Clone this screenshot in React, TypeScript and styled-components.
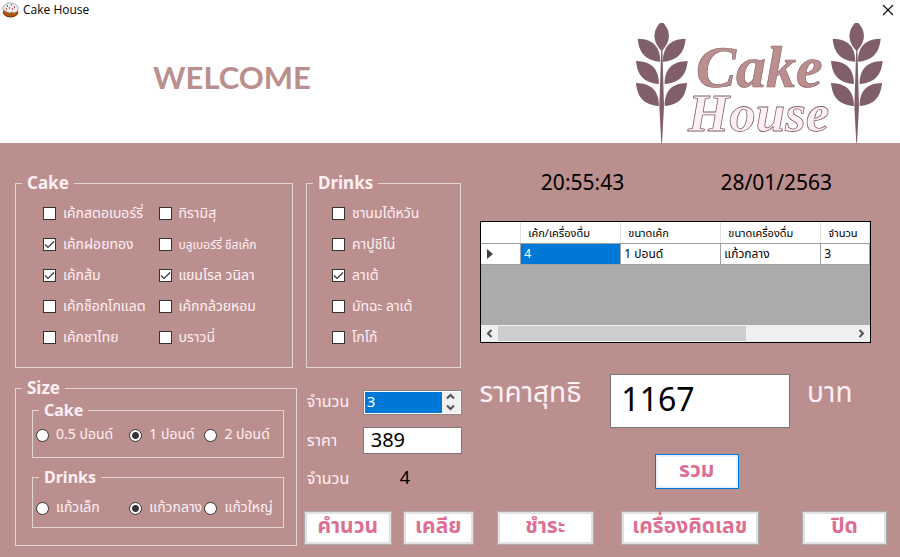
import React from "react";
import styled, { createGlobalStyle, css } from "styled-components";

const rose = "#bc8f8f";
const blush = "#fff0f5";
const pink = "#db7093";
const blue = "#0078d7";
const thai = `"Noto Sans Thai", "Noto Sans", "Open Sans", sans-serif`;

const GlobalStyle = createGlobalStyle`
  * { box-sizing: border-box; }
  body { margin: 0; background: ${rose}; font-family: ${thai}; }
  button, input, select { font-family: inherit; margin: 0; }
`;

const Window = styled.div`
  display: flex;
  flex-direction: column;
  min-height: 100vh;
  background: ${rose};
  border-bottom: 1px solid #26404a;
`;

const TitleBar = styled.header`
  display: flex;
  align-items: center;
  gap: 4px;
  height: 20px;
  padding: 0 6px 0 2px;
  background: #fff;
  font: 12px/16px "Open Sans", sans-serif;
  color: #000;
`;

const CloseButton = styled.button`
  display: flex;
  margin-left: auto;
  padding: 0;
  border: 0;
  background: none;
`;

const Banner = styled.div`
  display: flex;
  justify-content: space-between;
  height: 123px;
  padding: 3px 17px 0 153px;
  background: #fff;
`;

const Welcome = styled.h1`
  margin: 32px 0 0;
  font: bold 31px/44px Lato, "Liberation Sans", sans-serif;
  color: ${rose};
`;

const Content = styled.main`
  flex: 1;
  display: flex;
  flex-direction: column;
  gap: 6px;
  padding: 30px 13px 11px 15px;
`;

const Section = styled.div`
  display: flex;
`;

const Group = styled.fieldset<{ $grow: string; $after?: string; $top?: string }>`
  flex: ${(p) => p.$grow};
  min-width: 0;
  margin: ${(p) => p.$top ?? "0"} ${(p) => p.$after ?? "0"} 0 0;
  padding: 0;
  border: 1px solid #e3d5d3;
`;

const Legend = styled.legend<{ $small?: boolean }>`
  margin-left: 6px;
  padding: 0 5px;
  font: bold ${(p) => (p.$small ? "16px" : "17px")} / 20px "Noto Sans", sans-serif;
  color: ${blush};
`;

const Choices = styled.div<{ $columns: string; $indent: string }>`
  display: grid;
  grid-template-columns: ${(p) => p.$columns};
  grid-auto-rows: 31px;
  padding: 5px 0 14px ${(p) => p.$indent};
`;

const Choice = styled.label<{ $small?: boolean }>`
  display: flex;
  align-items: center;
  gap: 7px;
  min-width: 0;
  font-size: ${(p) => (p.$small ? "12px" : "14px")};
  line-height: 20px;
  white-space: nowrap;
  color: ${blush};
`;

const Tick = styled.input.attrs({ type: "checkbox" })`
  appearance: none;
  flex: none;
  width: 13px;
  height: 13px;
  border: 1px solid #333;
  background: #fff;
  &:checked {
    background: #fff
      url("data:image/svg+xml,%3Csvg xmlns='http://www.w3.org/2000/svg' viewBox='0 0 11 11'%3E%3Cpath d='M1 5.5l3 3 6-6' fill='none' stroke='%23333' stroke-width='1.2'/%3E%3C/svg%3E");
  }
`;

const Radio = styled.input.attrs({ type: "radio" })`
  appearance: none;
  flex: none;
  width: 13px;
  height: 13px;
  border: 1px solid #333;
  border-radius: 50%;
  background: #fff;
  &:checked {
    background: radial-gradient(circle, #333 0 3px, #fff 4px);
  }
`;

const SizeBody = styled.div`
  display: flex;
  flex-direction: column;
  gap: 9px;
  padding: 2px 12px 17px 16px;
`;

const RadioRow = styled.div<{ $pad: string }>`
  display: grid;
  grid-template-columns: 93fr 75fr 78fr;
  padding: ${(p) => p.$pad};
`;

const OrderPanel = styled.div`
  flex: 394;
  min-width: 0;
  margin-right: 16px;
`;

const Clock = styled.div`
  display: grid;
  grid-template-columns: 180fr 151fr;
  height: 48px;
  padding-left: 61px;
  font: 21px/18px "Noto Sans", sans-serif;
  color: #000;
`;

const GridBox = styled.div`
  display: flex;
  flex-direction: column;
  height: 122px;
  border: 1px solid #000;
  background: #ababab;
  overflow: hidden;
`;

const Grid = styled.table`
  width: 100%;
  table-layout: fixed;
  border-collapse: collapse;
  background: #fff;
  font-size: 11px;
  line-height: 16px;
  color: #000;
`;

const GridColumn = styled.col<{ $width?: string }>`
  width: ${(p) => p.$width ?? "auto"};
`;

const cell = css`
  height: 21px;
  border-right: 1px solid #a0a0a0;
  border-bottom: 1px solid #a0a0a0;
  text-align: left;
  font-weight: normal;
  white-space: nowrap;
  overflow: hidden;
`;

const HeadCell = styled.th`
  ${cell}
  padding: 3px 0 0 7px;
  border-right-color: #e0e0e0;
`;

const Cell = styled.td<{ $selected?: boolean }>`
  ${cell}
  padding: 0 0 0 3px;
  background: ${(p) => (p.$selected ? blue : "#fff")};
  color: ${(p) => (p.$selected ? "#fff" : "#000")};
  font-size: 12px;
`;

const Marker = styled.td`
  ${cell}
  padding: 0 0 0 6px;
  svg { display: block; }
`;

const ScrollBar = styled.div`
  display: flex;
  align-items: center;
  height: 17px;
  margin-top: auto;
  background: #f0f0f0;
`;

const ScrollArrow = styled.button`
  display: flex;
  justify-content: center;
  width: 17px;
  padding: 0;
  border: 0;
  background: none;
`;

const ScrollTrack = styled.div`
  flex: 1;
  height: 15px;
`;

const ScrollThumb = styled.div`
  width: 70%;
  height: 100%;
  background: #cdcdcd;
`;

const Checkout = styled.div`
  flex: 586;
  display: flex;
  flex-direction: column;
  justify-content: space-between;
  min-width: 0;
`;

const CheckoutTop = styled.div`
  display: flex;
`;

const Fields = styled.div`
  flex: 155;
  display: grid;
  grid-template-columns: 56px minmax(0, 1fr);
  grid-template-rows: 26px 27px 26px;
  row-gap: 12px;
  align-content: start;
  align-items: center;
  min-width: 0;
  padding: 15px 18px 0 3px;
`;

const FieldLabel = styled.label`
  font-size: 16px;
  line-height: 24px;
  white-space: nowrap;
  color: ${blush};
`;

const Spinner = styled.div`
  display: flex;
  height: 25px;
  border: 1px solid #8a8583;
  background: #fff;
  padding: 1px;
`;

const SpinnerInput = styled.input`
  flex: 1;
  min-width: 0;
  padding: 0 2px;
  border: 0;
  background: ${blue};
  color: #fff;
  font-size: 15px;
`;

const SpinnerButtons = styled.div`
  display: flex;
  flex-direction: column;
  width: 18px;
  background: #f0f0f0;
`;

const SpinnerButton = styled.button`
  flex: 1;
  display: flex;
  align-items: center;
  justify-content: center;
  padding: 0;
  border: 0;
  background: none;
`;

const ValueInput = styled.input<{ $large?: boolean }>`
  width: 100%;
  min-width: 0;
  height: ${(p) => (p.$large ? "54px" : "27px")};
  padding: ${(p) => (p.$large ? "0 10px" : "0 7px")};
  border: 1px solid #7a7a7a;
  background: #fff;
  color: #000;
  font-size: ${(p) => (p.$large ? "32px" : "20px")};
  line-height: 1;
`;

const Count = styled.output`
  padding-left: 37px;
  font-size: 18px;
  line-height: 24px;
  color: #000;
`;

const Totals = styled.div`
  flex: 408;
  display: flex;
  flex-direction: column;
  gap: 26px;
  min-width: 0;
`;

const TotalRow = styled.div`
  display: grid;
  grid-template-columns: minmax(0, 131fr) minmax(0, 180fr) minmax(0, 97fr);
  align-items: start;
`;

const TotalLabel = styled.label<{ $indent?: string }>`
  padding: 0 0 0 ${(p) => p.$indent ?? "0"};
  font-size: 28px;
  line-height: 40px;
  white-space: nowrap;
  color: ${blush};
`;

const ActionButton = styled.button<{ $width: string; $after?: string; $focused?: boolean }>`
  flex: none;
  width: ${(p) => p.$width};
  height: ${(p) => (p.$focused ? "35px" : "34px")};
  margin-right: ${(p) => p.$after ?? "0"};
  padding: 0 0 2px;
  border: 1px solid ${(p) => (p.$focused ? blue : "#adadad")};
  box-shadow: inset 0 0 0 2px ${(p) => (p.$focused ? "#e5f1fb" : "#e1e1e1")};
  background: #fff;
  color: ${pink};
  font-size: 21px;
  font-weight: bold;
  line-height: 28px;
  white-space: nowrap;
`;

const SumRow = styled.div`
  display: flex;
  padding-left: 43%;
`;

const ActionRow = styled.div`
  display: flex;
  width: 100%;
  padding-bottom: 1px;
`;

function CakeIcon() {
  return (
    <svg width="17" height="16" viewBox="0 0 17 16" aria-hidden="true">
      <path d="M1 6v5c1 3 4 4 7.500 4s7-1 7.500-4V6z" fill="#b5560f" />
      <path d="M1 10c1 3 4 5 7.500 5s7-2 7.500-5" fill="none" stroke="#6d3208" />
      <path d="M1 5c1-2 4-4 7.500-4S16 3 16 6v3l-2 1-2 1-2-1-2 1-3-1-2-1-2-1z" fill="#f3eeee" stroke="#888" strokeWidth=".7" />
      <path d="M5 4h1M9 3h1M12 5h1M7 6h1M4 7h1M10 7h1" stroke="#c02035" strokeWidth="1.300" />
    </svg>
  );
}

function Sprig({ x }: { x: number }) {
  return (
    <g transform={`translate(${x} 0) scale(.3333)`} fill="#805f6b">
      <path d="M72 0h10c19 20 27 52-5 84C45 52 53 20 72 0z" />
      <path d="M149 47c-50 1-68 28-68 69 46-4 64-28 68-69zM5 47c50 1 68 28 68 69C27 112 9 88 5 47z" />
      <path d="M155 114c-50 1-69 28-69 69 48-4 65-28 69-69zM0 114c50 1 69 28 69 69C21 179 4 155 0 114z" />
      <path d="M153 180c-50 1-67 28-67 69 46-4 63-28 67-69zM0 180c50 1 69 28 69 69C21 245 4 221 0 180z" />
      <path d="M76 72h3l5 178-6 112h-2l-6-112z" />
    </g>
  );
}

function Logo() {
  return (
    <svg width="247" height="120" viewBox="0 0 247 120" role="img" aria-label="Cake House">
      <Sprig x={0} />
      <Sprig x={195} />
      <g fontFamily="'Liberation Serif', serif" fontStyle="italic" strokeLinejoin="round">
        <text x="60" y="64" fontSize="60" fontWeight="bold" fill={rose} stroke="#805f6b" strokeWidth=".6">Cake</text>
        <text x="52" y="108" fontSize="53" fontWeight="bold" fill={blush} stroke="#805f6b" strokeWidth=".8">House</text>
      </g>
    </svg>
  );
}

function Chevron({ turn }: { turn: number }) {
  return (
    <svg width="9" height="9" viewBox="0 0 9 9" aria-hidden="true">
      <path d="M1 6.500l3.500-3.500L8 6.500" transform={`rotate(${turn} 4.500 4.500)`} fill="none" stroke="#505050" strokeWidth="2" />
    </svg>
  );
}

type Item = { name: string; on?: boolean; small?: boolean };

const cakes: Item[] = [
  { name: "เค้กสตอเบอร์รี่" },
  { name: "ทิรามิสุ" },
  { name: "เค้กฝอยทอง", on: true },
  { name: "บลูเบอร์รี่ ชีสเค้ก", small: true },
  { name: "เค้กส้ม", on: true },
  { name: "แยมโรล วนิลา", on: true },
  { name: "เค้กช็อกโกแลต" },
  { name: "เค้กกล้วยหอม" },
  { name: "เค้กชาไทย" },
  { name: "บราวนี่" },
];

const drinks: Item[] = [
  { name: "ชานมไต้หวัน" },
  { name: "คาปูชิโน่" },
  { name: "ลาเต้", on: true },
  { name: "มัทฉะ ลาเต้" },
  { name: "โกโก้" },
];

function TickList({ items }: { items: Item[] }) {
  return (
    <>
      {items.map((item) => (
        <Choice key={item.name} $small={item.small}>
          <Tick defaultChecked={item.on} />
          {item.name}
        </Choice>
      ))}
    </>
  );
}

function RadioList({ name, items, chosen, pad }: { name: string; items: string[]; chosen: string; pad: string }) {
  return (
    <RadioRow $pad={pad}>
      {items.map((item) => (
        <Choice key={item}>
          <Radio name={name} defaultChecked={item === chosen} />
          {item}
        </Choice>
      ))}
    </RadioRow>
  );
}

export default function App() {
  return (
    <Window>
      <GlobalStyle />
      <TitleBar>
        <CakeIcon />
        Cake House
        <CloseButton aria-label="Close">
          <svg width="12" height="12" viewBox="0 0 12 12">
            <path d="M1 1l10 10M11 1L1 11" stroke="#111" strokeWidth="1.200" />
          </svg>
        </CloseButton>
      </TitleBar>
      <Banner>
        <Welcome>WELCOME</Welcome>
        <Logo />
      </Banner>
      <Content>
        <Section>
          <Group $grow="278" $after="13px">
            <Legend>Cake</Legend>
            <Choices $columns="116fr 134fr" $indent="27px">
              <TickList items={cakes} />
            </Choices>
          </Group>
          <Group $grow="154" $after="19px">
            <Legend>Drinks</Legend>
            <Choices $columns="1fr" $indent="25px">
              <TickList items={drinks} />
            </Choices>
          </Group>
          <OrderPanel>
            <Clock>
              <time>20:55:43</time>
              <time>28/01/2563</time>
            </Clock>
            <GridBox>
              <Grid>
                <colgroup>
                  <GridColumn $width="40px" />
                  <GridColumn $width="100px" />
                  <GridColumn $width="100px" />
                  <GridColumn $width="100px" />
                  <GridColumn />
                </colgroup>
                <thead>
                  <tr>
                    <HeadCell aria-label="Row" />
                    <HeadCell>เค้ก/เครื่องดื่ม</HeadCell>
                    <HeadCell>ขนาดเค้ก</HeadCell>
                    <HeadCell>ขนาดเครื่องดื่ม</HeadCell>
                    <HeadCell>จำนวน</HeadCell>
                  </tr>
                </thead>
                <tbody>
                  <tr>
                    <Marker>
                      <svg width="6" height="10" viewBox="0 0 6 10" aria-hidden="true">
                        <path d="M0 0l6 5-6 5z" fill="#404040" />
                      </svg>
                    </Marker>
                    <Cell $selected>4</Cell>
                    <Cell>1 ปอนด์</Cell>
                    <Cell>แก้วกลาง</Cell>
                    <Cell>3</Cell>
                  </tr>
                </tbody>
              </Grid>
              <ScrollBar>
                <ScrollArrow aria-label="Scroll left"><Chevron turn={-90} /></ScrollArrow>
                <ScrollTrack><ScrollThumb /></ScrollTrack>
                <ScrollArrow aria-label="Scroll right"><Chevron turn={90} /></ScrollArrow>
              </ScrollBar>
            </GridBox>
          </OrderPanel>
        </Section>
        <Section>
          <Group $grow="281" $after="7px" $top="4px">
            <Legend>Size</Legend>
            <SizeBody>
              <Group $grow="none">
                <Legend $small>Cake</Legend>
                <RadioList name="cake-size" items={["0.5 ปอนด์", "1 ปอนด์", "2 ปอนด์"]} chosen="1 ปอนด์" pad="5px 0 12px 3px" />
              </Group>
              <Group $grow="none">
                <Legend $small>Drinks</Legend>
                <RadioList name="drink-size" items={["แก้วเล็ก", "แก้วกลาง", "แก้วใหญ่"]} chosen="แก้วกลาง" pad="11px 0 9px 3px" />
              </Group>
            </SizeBody>
          </Group>
          <Checkout>
            <CheckoutTop>
              <Fields>
                <FieldLabel htmlFor="amount">จำนวน</FieldLabel>
                <Spinner>
                  <SpinnerInput id="amount" defaultValue="3" />
                  <SpinnerButtons>
                    <SpinnerButton aria-label="Increase"><Chevron turn={0} /></SpinnerButton>
                    <SpinnerButton aria-label="Decrease"><Chevron turn={180} /></SpinnerButton>
                  </SpinnerButtons>
                </Spinner>
                <FieldLabel htmlFor="price">ราคา</FieldLabel>
                <ValueInput id="price" defaultValue="389" />
                <FieldLabel htmlFor="count">จำนวน</FieldLabel>
                <Count id="count">4</Count>
              </Fields>
              <Totals>
                <TotalRow>
                  <TotalLabel htmlFor="total">ราคาสุทธิ</TotalLabel>
                  <ValueInput id="total" $large defaultValue="1167" />
                  <TotalLabel as="span" $indent="17px">บาท</TotalLabel>
                </TotalRow>
                <SumRow>
                  <ActionButton $width="84px" $focused>รวม</ActionButton>
                </SumRow>
              </Totals>
            </CheckoutTop>
            <ActionRow>
              <ActionButton $width="88px" $after="11px">คำนวน</ActionButton>
              <ActionButton $width="71px" $after="23px">เคลีย</ActionButton>
              <ActionButton $width="97px" $after="27px">ชำระ</ActionButton>
              <ActionButton $width="138px" $after="auto">เครื่องคิดเลข</ActionButton>
              <ActionButton $width="85px">ปิด</ActionButton>
            </ActionRow>
          </Checkout>
        </Section>
      </Content>
    </Window>
  );
}
